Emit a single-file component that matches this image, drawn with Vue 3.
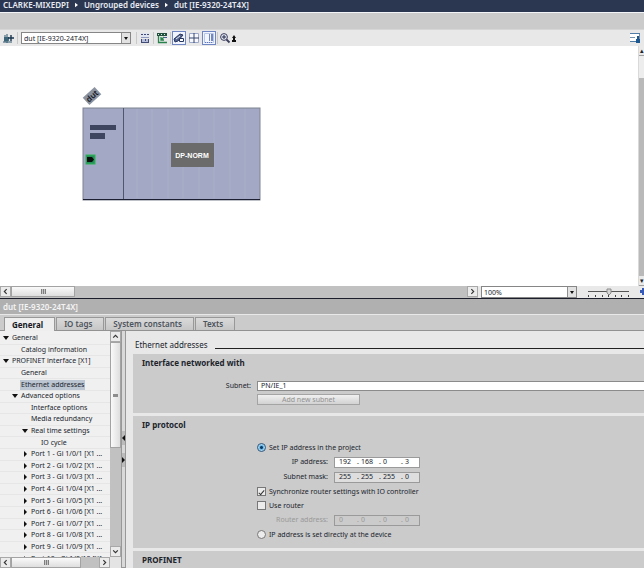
<script setup>
import { ref } from 'vue'

const crumbs = ['CLARKE-MIXEDPI', 'Ungrouped devices', 'dut [IE-9320-24T4X]']
const device = ref('dut [IE-9320-24T4X]')
const zoom = ref('100%')

const tabs = ['General', 'IO tags', 'System constants', 'Texts']
const activeTab = ref('General')

const ports = Array.from({ length: 10 }, (_, i) => ({
  label: `Port ${i + 1} - Gi 1/0/${i + 1} [X1 ...`,
  level: 2,
  state: 'closed'
}))

const tree = [
  { label: 'General', level: 0, state: 'open' },
  { label: 'Catalog information', level: 1 },
  { label: 'PROFINET interface [X1]', level: 0, state: 'open' },
  { label: 'General', level: 1 },
  { label: 'Ethernet addresses', level: 1 },
  { label: 'Advanced options', level: 1, state: 'open' },
  { label: 'Interface options', level: 2 },
  { label: 'Media redundancy', level: 2 },
  { label: 'Real time settings', level: 2, state: 'open' },
  { label: 'IO cycle', level: 3 },
  ...ports
]
const selected = ref(4)

const subnet = ref('PN/IE_1')
const ipMode = ref('project')
const syncRouter = ref(true)
const useRouter = ref(false)
const ip = ref(['192', '168', '0', '3'])
const mask = ref(['255', '255', '255', '0'])
const router = ref(['0', '0', '0', '0'])
</script>

<template>
  <div class="app">
    <nav class="crumbs" aria-label="Breadcrumb">
      <template v-for="(crumb, i) in crumbs" :key="crumb">
        <svg v-if="i" class="crumb-arrow" viewBox="0 0 4 6"><path d="M0 0L4 3L0 6Z" /></svg>
        <a href="#">{{ crumb }}</a>
      </template>
    </nav>
    <div class="band"></div>

    <div class="toolbar">
      <button class="tool" aria-label="Add device">
        <svg viewBox="0 0 12 12">
          <path d="M1 5h5v4H1z" fill="#4d7487" />
          <path d="M2 3v7M4 2v9M0 10h9" stroke="#2d566c" fill="none" />
          <path d="M5 6h6M8 3v6" stroke="#17344d" stroke-width="1.4" />
        </svg>
      </button>
      <i class="sep"></i>
      <span class="combo device-combo">
        <select v-model="device" aria-label="Device">
          <option>dut [IE-9320-24T4X]</option>
        </select>
        <span class="combo-arrow"></span>
      </span>
      <i class="sep"></i>
      <button class="tool" aria-label="Show rack">
        <svg viewBox="0 0 12 12">
          <path d="M2 1h8v4H2z" fill="#dfe4f2" />
          <path d="M2 2.500h8" stroke="#424b76" stroke-dasharray="2 1" />
          <path d="M2 5.500h8" stroke="#8f98bd" />
          <path d="M2 7h8v4H2z" fill="#b7bfdc" />
          <path d="M2 10.500h8M2.500 7v4M9.500 7v4M6.500 7v2" stroke="#424b76" />
        </svg>
      </button>
      <i class="sep"></i>
      <button class="tool" aria-label="Show network">
        <svg viewBox="0 0 12 12">
          <path d="M1 1h10v3H1z" fill="#23503e" />
          <path d="M2 2.500h1M5 2.500h1M8 2.500h1" stroke="#d6efe0" />
          <path d="M2.500 4v6.500H11M5 8l3-3M5 5v3h3" stroke="#29814b" fill="none" stroke-width="1.3" />
          <path d="M8 5h3v1H8z" fill="#4a5d95" />
        </svg>
      </button>
      <i class="sep"></i>
      <button class="tool on" aria-label="Show labels">
        <svg viewBox="0 0 12 12">
          <path d="M1 7l6-5 3 1-5 6-3 1z" fill="#56658c" stroke="#26365f" />
          <path d="M6.500 6.500h4v3h-4z" fill="#fff" stroke="#26365f" />
          <path d="M3 7l4-3" stroke="#dfe6f5" />
        </svg>
      </button>
      <button class="tool" aria-label="Show grid">
        <svg viewBox="0 0 12 12">
          <path d="M1.500 1.500h9v9h-9z" fill="#f6f8fd" stroke="#9ba8c9" />
          <path d="M6 1v10M1 6h10" stroke="#38466e" />
        </svg>
      </button>
      <button class="tool on" aria-label="Show table">
        <svg viewBox="0 0 12 12">
          <path d="M1.500 1.500h9v9h-9z" fill="#f3f6ff" stroke="#b9c6e6" />
          <path d="M6 2h1v7H6zM8 2h2v7H8z" fill="#7288bd" />
          <path d="M2 10.500h8" stroke="#5f78b5" stroke-dasharray="1 1" />
        </svg>
      </button>
      <i class="sep"></i>
      <button class="tool zoom-tool" aria-label="Zoom">
        <svg viewBox="0 0 18 12">
          <circle cx="5" cy="5" r="3.4" fill="#e6ebf6" stroke="#3b3d5c" />
          <path d="M3 5h4M5 3v4" stroke="#222846" />
          <path d="M7.500 7.500l3 3" stroke="#3b3d5c" stroke-width="1.8" />
          <path d="M15 3l2 3h-4zM14 6h2v2h-2zM13 8h4v2h-4z" fill="#111" />
        </svg>
      </button>
      <button class="tool last" aria-label="Properties">
        <svg viewBox="0 0 12 12">
          <path d="M1 1h10v9H1z" fill="#fff" />
          <path d="M1 1h10v1H1zM1 9h10v1H1z" fill="#4f7ba7" />
          <path d="M7 7h4v4H7zM8 4h2v3H8z" fill="#1d578f" />
          <path d="M1 5.500h5M10.500 2v5" stroke="#7492ad" />
        </svg>
      </button>
    </div>

    <div class="canvas">
      <div class="sheet">
        <svg class="device" viewBox="0 0 180 116">
          <g transform="rotate(-42 10 10)">
            <rect x="2" y="5" width="16" height="10" fill="#8b92a0" />
            <text x="10" y="13" class="device-name">dut</text>
          </g>
          <rect x="1" y="22" width="177" height="92" fill="#a3a9c4" stroke="#7f8390" />
          <path
            d="M55 23v89M70 23v89M86 23v89M101 23v89M117 23v89M132 23v89M148 23v89M163 23v89"
            stroke="#a9aec7"
          />
          <path d="M41.500 22v92" stroke="#50566b" />
          <path d="M1 113.500h177" stroke="#1d2033" />
          <path d="M8 39h26v5H8zM8 47h15v6H8z" fill="#3e455e" />
          <rect x="4" y="69" width="9" height="9" fill="#27905a" stroke="#2fb457" />
          <path d="M5 71h5l2 2.500-2 2.500H5z" fill="#080c0a" />
          <rect x="89" y="57" width="43" height="24" fill="#6b6b6b" />
          <text x="110" y="72" class="device-type">DP-NORM</text>
        </svg>
      </div>
      <div class="v-edge">
        <span class="edge-btn">▴</span>
        <span class="edge-thumb"></span>
        <span class="edge-track"></span>
        <span class="edge-btn">▾</span>
      </div>
    </div>

    <div class="canvas-foot">
      <div class="h-scroll">
        <button class="scroll-btn" aria-label="Scroll left">
          <svg viewBox="0 0 6 6"><path d="M4 1L2 3L4 5" /></svg>
        </button>
        <span class="h-thumb canvas-thumb"><i class="grip"></i></span>
        <span class="h-track"></span>
        <button class="scroll-btn" aria-label="Scroll right">
          <svg viewBox="0 0 6 6"><path d="M2 1L4 3L2 5" /></svg>
        </button>
      </div>
      <span class="combo zoom-combo">
        <select v-model="zoom" aria-label="Zoom level">
          <option>100%</option>
        </select>
        <span class="combo-arrow"></span>
      </span>
      <svg class="zoom-slider" viewBox="0 0 60 11">
        <path d="M9 5.500h41" stroke="#555" />
        <path d="M9.500 9v2M16.500 9v2M23.500 9v2M29.500 8v3M36.500 9v2M42.500 9v2M49.500 9v2" stroke="#444" />
        <path d="M28 3h4v4l-2 2-2-2z" fill="#d5d5d5" stroke="#8b8b8b" />
        <path d="M61 4h2V2h2v7h-2V7h-2z" fill="#3559b5" />
      </svg>
    </div>

    <section class="inspector">
      <h1 class="inspector-title">dut [IE-9320-24T4X]</h1>
      <div class="tabs" role="tablist">
        <button
          v-for="tab in tabs"
          :key="tab"
          class="tab"
          :class="{ active: activeTab === tab }"
          role="tab"
          @click="activeTab = tab"
        >
          {{ tab }}
        </button>
      </div>

      <div class="body">
        <aside class="side">
          <div class="side-main">
            <div class="tree-clip">
              <ul class="tree">
                <li v-for="(node, i) in tree" :key="i" class="node" :class="'level-' + node.level">
                  <svg v-if="node.state" class="twist" viewBox="0 0 6 6">
                    <path :d="node.state === 'open' ? 'M0 1H6L3 5Z' : 'M2 0L5 3L2 6Z'" />
                  </svg>
                  <span v-else class="twist"></span>
                  <button class="node-label" :class="{ selected: selected === i }" @click="selected = i">
                    {{ node.label }}
                  </button>
                </li>
              </ul>
            </div>
            <div class="v-scroll">
              <button class="scroll-btn" aria-label="Scroll up">
                <svg viewBox="0 0 6 6"><path d="M1 4L3 2L5 4" /></svg>
              </button>
              <span class="v-thumb"><i class="grip-v"></i></span>
              <span class="v-track"></span>
              <button class="scroll-btn" aria-label="Scroll down">
                <svg viewBox="0 0 6 6"><path d="M1 2L3 4L5 2" /></svg>
              </button>
            </div>
          </div>
          <div class="h-scroll side-foot">
            <button class="scroll-btn" aria-label="Scroll left">
              <svg viewBox="0 0 6 6"><path d="M4 1L2 3L4 5" /></svg>
            </button>
            <span class="h-thumb side-thumb"><i class="grip"></i></span>
            <span class="h-track"></span>
            <button class="scroll-btn" aria-label="Scroll right">
              <svg viewBox="0 0 6 6"><path d="M2 1L4 3L2 5" /></svg>
            </button>
            <span class="corner"></span>
          </div>
        </aside>

        <div class="splitter">
          <button class="split-btn" aria-label="Collapse left">
            <svg viewBox="0 0 3 6"><path d="M3 0L0 3L3 6Z" /></svg>
          </button>
          <button class="split-btn" aria-label="Collapse right">
            <svg viewBox="0 0 3 6"><path d="M0 0L3 3L0 6Z" /></svg>
          </button>
        </div>

        <form class="content" @submit.prevent>
          <h2 class="heading">Ethernet addresses</h2>

          <section class="panel">
            <h3>Interface networked with</h3>
            <div class="row subnet-row">
              <label for="subnet" class="label">Subnet:</label>
              <input id="subnet" v-model="subnet" class="field" />
            </div>
            <button type="button" class="add-btn" disabled>Add new subnet</button>
          </section>

          <section class="panel">
            <h3>IP protocol</h3>
            <div class="options">
              <label class="choice">
                <input v-model="ipMode" type="radio" name="mode" value="project" />
                Set IP address in the project
              </label>
              <div class="row">
                <label for="ip-0" class="ip-label">IP address:</label>
                <span class="ip">
                  <template v-for="(part, i) in ip" :key="i">
                    <i v-if="i">.</i>
                    <input :id="'ip-' + i" v-model="ip[i]" :aria-label="'IP address part ' + (i + 1)" />
                  </template>
                </span>
              </div>
              <div class="row">
                <label for="mask-0" class="ip-label">Subnet mask:</label>
                <span class="ip grey">
                  <template v-for="(part, i) in mask" :key="i">
                    <i v-if="i">.</i>
                    <input :id="'mask-' + i" v-model="mask[i]" :aria-label="'Subnet mask part ' + (i + 1)" />
                  </template>
                </span>
              </div>
              <label class="choice">
                <input v-model="syncRouter" type="checkbox" />
                Synchronize router settings with IO controller
              </label>
              <label class="choice">
                <input v-model="useRouter" type="checkbox" />
                Use router
              </label>
              <div class="row off">
                <label for="router-0" class="ip-label">Router address:</label>
                <span class="ip">
                  <template v-for="(part, i) in router" :key="i">
                    <i v-if="i">.</i>
                    <input
                      :id="'router-' + i"
                      v-model="router[i]"
                      :disabled="!useRouter"
                      :aria-label="'Router address part ' + (i + 1)"
                    />
                  </template>
                </span>
              </div>
              <label class="choice">
                <input v-model="ipMode" type="radio" name="mode" value="device" />
                IP address is set directly at the device
              </label>
            </div>
          </section>

          <section class="panel">
            <h3>PROFINET</h3>
          </section>
        </form>
      </div>
    </section>
  </div>
</template>

<style>
body {
  margin: 0;
  overflow: hidden;
}
</style>

<style scoped>
.app {
  display: flex;
  flex-direction: column;
  height: 100vh;
  background: #e8e8e8;
  color: #20242c;
  font-family: 'Noto Sans', 'Open Sans', sans-serif;
  font-size: 7px;
  line-height: 12px;
}

.app * {
  box-sizing: border-box;
}

button,
input,
select {
  margin: 0;
  padding: 0;
  border: 0;
  border-radius: 0;
  background: none;
  color: inherit;
  font: inherit;
}

h1,
h2,
h3 {
  margin: 0;
}

svg {
  display: block;
}

i {
  font-style: normal;
}

.crumbs {
  display: flex;
  align-items: center;
  gap: 6px;
  flex-shrink: 0;
  height: 13px;
  padding: 0 3px 2px;
  border-bottom: 1px solid #f2f4f8;
  background: #2b3650;
  font-size: 8px;
  font-weight: 600;
}

.crumbs a {
  color: #e8ebf2;
  text-decoration: none;
}

.crumb-arrow {
  width: 3px;
  height: 6px;
  fill: #fff;
}

.band {
  flex-shrink: 0;
  height: 17px;
  border-bottom: 1px solid #d6d6d6;
  background: #cbcbcb;
}

.toolbar {
  display: flex;
  align-items: center;
  gap: 1px;
  flex-shrink: 0;
  height: 16px;
  padding: 0 2px;
  background: #e8e8e8;
}

.tool {
  display: flex;
  align-items: center;
  justify-content: center;
  width: 14px;
  height: 14px;
}

.tool svg {
  width: 12px;
  height: 12px;
}

.tool.on {
  border: 1px solid #6f86c2;
  background: #f2f5ff;
}

.tool.zoom-tool,
.zoom-tool svg {
  width: 18px;
}

.tool.last {
  margin-left: auto;
}

.sep {
  width: 1px;
  height: 12px;
  background: #c9c9c9;
}

.combo {
  position: relative;
  display: flex;
  border: 1px solid #868686;
  background: #fff;
}

.combo select {
  flex: 1;
  min-width: 0;
  padding-left: 2px;
  appearance: none;
}

.combo-arrow {
  display: flex;
  align-items: center;
  justify-content: center;
  width: 9px;
  border-left: 1px solid #8f8f8f;
  background: #e2e2e2;
  pointer-events: none;
}

.combo-arrow::before {
  content: '';
  border: 2px solid transparent;
  border-top: 3px solid #111;
  border-bottom: 0;
}

.device-combo {
  width: 110px;
  height: 12px;
  margin: 0 4px 0 2px;
}

.canvas {
  display: flex;
  flex: 1;
  min-height: 0;
  background: #fff;
}

.sheet {
  position: relative;
  flex: 1;
  overflow: hidden;
}

.device {
  position: absolute;
  left: 82px;
  top: 40px;
  width: 180px;
  height: 116px;
}

.device-name {
  fill: #15181f;
  font-size: 8px;
  font-weight: 600;
  text-anchor: middle;
}

.device-type {
  fill: #fff;
  font-family: 'Liberation Sans', Arial, sans-serif;
  font-size: 7px;
  font-weight: 700;
  text-anchor: middle;
}

.v-edge {
  display: flex;
  flex-direction: column;
  width: 6px;
  border-left: 1px solid #d9d9d9;
}

.edge-btn {
  height: 10px;
  border-bottom: 1px solid #a0a0a0;
  background: #e9e9e9;
  line-height: 10px;
  text-align: center;
}

.edge-thumb {
  height: 22px;
  background: #ededed;
}

.edge-track {
  flex: 1;
  background: #b9b9b9;
}

.canvas-foot {
  display: flex;
  flex-shrink: 0;
  height: 12px;
  background: #e9e9e9;
}

.h-scroll {
  display: flex;
  flex: 1;
  background: #c1c1c1;
}

.scroll-btn {
  display: flex;
  align-items: center;
  justify-content: center;
  flex-shrink: 0;
  width: 11px;
  height: 11px;
  border: 1px solid #a8a8a8;
  background: #ebebeb;
}

.scroll-btn svg {
  width: 7px;
  height: 7px;
  fill: none;
  stroke: #333;
}

.h-thumb {
  display: flex;
  align-items: center;
  justify-content: center;
  height: 11px;
  border: 1px solid #a3a3a3;
  background: linear-gradient(#fafafa, #dedede);
}

.canvas-thumb {
  width: 64px;
}

.h-track {
  flex: 1;
}

.grip {
  width: 5px;
  height: 5px;
  background: repeating-linear-gradient(90deg, #7d7d7d 0 1px, #c6c6c6 1px 2px);
}

.zoom-combo {
  width: 96px;
  height: 12px;
  margin-left: 3px;
}

.zoom-slider {
  width: 60px;
  height: 11px;
  margin: 0 5px 0 2px;
  overflow: visible;
}

.inspector {
  display: flex;
  flex-direction: column;
  flex-shrink: 0;
  height: 270px;
  border-top: 1px solid #1d1e2b;
}

.inspector-title {
  flex-shrink: 0;
  height: 16px;
  padding-left: 3px;
  border-bottom: 1px solid #e8e8e8;
  background: #b0b0b0;
  color: #f4f4f4;
  font-size: 8px;
  font-weight: 600;
  line-height: 15px;
}

.tabs {
  display: flex;
  gap: 1px;
  flex-shrink: 0;
  height: 16px;
  padding: 2px 4px 0;
  border-bottom: 1px solid #929292;
  background: #cbcbcb;
}

.tab {
  height: 13px;
  padding: 0 11px 0 7px;
  border: 1px solid #989898;
  border-bottom: 0;
  background: linear-gradient(#dadada, #c6c6c6);
  color: #4d535c;
  font-size: 8px;
  font-weight: 600;
}

.tab.active {
  height: 14px;
  background: #eee;
  color: #15181f;
  font-weight: 700;
}

.body {
  display: flex;
  flex: 1;
  min-height: 0;
}

.side {
  display: flex;
  flex-direction: column;
  width: 121px;
  flex-shrink: 0;
}

.side-main {
  display: flex;
  flex: 1;
  min-height: 0;
}

.tree-clip {
  flex: 1;
  min-width: 0;
  padding-top: 2px;
  overflow: hidden;
  background: #f0f0f0;
}

.tree {
  display: grid;
  grid-auto-rows: 1fr;
  height: 232px;
  margin: 0;
  padding: 0;
  list-style: none;
}

.node {
  display: flex;
  align-items: center;
  gap: 2px;
  padding-left: 3px;
  border-bottom: 1px solid #e6e6e6;
  white-space: nowrap;
}

.level-1 {
  padding-left: 12px;
}

.level-2 {
  padding-left: 22px;
}

.level-3 {
  padding-left: 32px;
}

.twist {
  width: 6px;
  height: 6px;
  fill: #111;
}

.node-label {
  height: 10px;
  padding: 0 1px;
  line-height: 10px;
}

.node-label.selected {
  background: #bcc6d2;
}

.v-scroll {
  display: flex;
  flex-direction: column;
  width: 11px;
  background: #c1c1c1;
}

.v-thumb {
  display: flex;
  align-items: center;
  justify-content: center;
  height: 106px;
  border: 1px solid #a3a3a3;
  background: linear-gradient(90deg, #fafafa, #dedede);
}

.grip-v {
  width: 5px;
  height: 3px;
  background: #8d8d8d;
}

.v-track {
  flex: 1;
}

.side-foot {
  flex: none;
  height: 11px;
}

.side-thumb {
  width: 70px;
}

.corner {
  width: 11px;
  background: #e4e4e4;
}

.splitter {
  display: flex;
  flex-direction: column;
  justify-content: center;
  gap: 8px;
  width: 5px;
  flex-shrink: 0;
  border: 1px solid #989898;
  border-top: 0;
  background: #d9d9d9;
}

.split-btn {
  height: 14px;
  background: #bcbcbc;
}

.split-btn svg {
  width: 3px;
  height: 6px;
  fill: #111;
}

.content {
  display: flex;
  flex-direction: column;
  gap: 3px;
  flex: 1;
  min-width: 0;
  padding: 7px 0 0 7px;
  overflow: hidden;
  background: #e8e8e8;
}

.heading {
  display: flex;
  align-items: center;
  gap: 7px;
  flex-shrink: 0;
  height: 13px;
  padding-left: 2px;
  font-size: 8px;
  font-weight: 400;
}

.heading::after {
  content: '';
  flex: 1;
  height: 1px;
  margin-top: 7px;
  background: #222;
}

.panel {
  flex-shrink: 0;
  padding: 3px 0 8px 9px;
  background: #cbcbcb;
}

.panel:last-child {
  flex: 1 0 auto;
}

.panel h3 {
  font-size: 8px;
  font-weight: 700;
}

.row {
  display: flex;
  align-items: center;
}

.subnet-row {
  margin-top: 11px;
}

.label {
  width: 109px;
  margin-right: 6px;
  text-align: right;
}

.field {
  flex: 1;
  min-width: 0;
  height: 10px;
  padding-left: 3px;
  border: 1px solid #8b8b8b;
  border-right: 0;
  background: #fff;
}

.add-btn {
  display: block;
  width: 103px;
  height: 11px;
  margin: 2px 0 0 115px;
  border: 1px solid #a4a4a4;
  background: linear-gradient(#f0f0f0, #d2d2d2);
  color: #929292;
  line-height: 9px;
}

.options {
  display: grid;
  gap: 3px;
  margin: 11px 0 0 115px;
}

.choice {
  display: flex;
  align-items: center;
  gap: 3px;
  height: 11px;
}

.choice input {
  display: grid;
  place-items: center;
  width: 9px;
  height: 9px;
  border: 1px solid #777;
  background: #ececec;
  appearance: none;
}

.choice input[type='radio'] {
  border-radius: 50%;
}

.choice input[type='radio']:checked {
  border-color: #29557d;
  background: radial-gradient(#0d3e68 0 1px, #6cb9e6 2px, #d7effb 4px);
}

.choice input[type='checkbox']:checked::before {
  content: '';
  width: 2px;
  height: 5px;
  border: solid #333;
  border-width: 0 1px 1px 0;
  transform: rotate(40deg);
}

.ip-label {
  width: 71px;
  margin-right: 6px;
  text-align: right;
}

.ip {
  display: flex;
  align-items: center;
  width: 86px;
  height: 11px;
  padding-left: 4px;
  border: 1px solid #9a9a9a;
  background: #fff;
}

.ip input {
  flex: none;
  width: 18px;
  height: 9px;
}

.ip input:last-child {
  width: 12px;
}

.ip i {
  flex: none;
  width: 4px;
}

.ip.grey {
  background: #dedede;
}

.off {
  color: #999;
}

.off .ip {
  background: #cbcbcb;
}
</style>
